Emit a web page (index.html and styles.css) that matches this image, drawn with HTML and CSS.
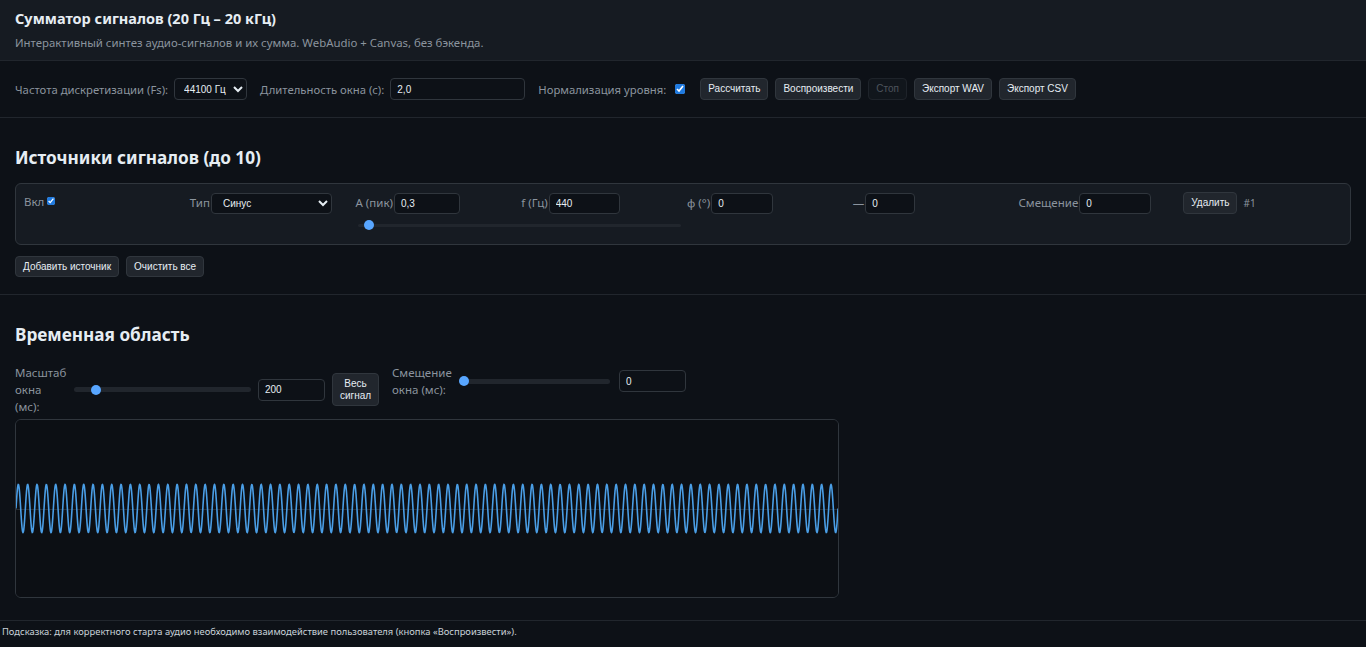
FILE: index.html
```html
<!DOCTYPE html>
<html lang="ru">
<head>
<meta charset="utf-8">
<title>Сумматор сигналов</title>
<link rel="stylesheet" href="styles.css">
</head>
<body>
<header class="app-header">
  <h1 class="app-title">Сумматор сигналов (20 Гц – 20 кГц)</h1>
  <p class="app-subtitle">Интерактивный синтез аудио-сигналов и их сумма. WebAudio + Canvas, без бэкенда.</p>
</header>

<div class="toolbar">
  <label class="field">
    <span class="field-label">Частота дискретизации (Fs):</span>
    <select class="select select-fs"><option>44100 Гц</option></select>
  </label>
  <label class="field">
    <span class="field-label">Длительность окна (с):</span>
    <input class="input input-dur" type="text" value="2,0">
  </label>
  <label class="field field-check">
    <span class="field-label">Нормализация уровня:</span>
    <input class="check" type="checkbox" checked>
  </label>
  <div class="btn-group">
    <button class="btn">Рассчитать</button>
    <button class="btn">Воспроизвести</button>
    <button class="btn" disabled>Стоп</button>
    <button class="btn">Экспорт WAV</button>
    <button class="btn">Экспорт CSV</button>
  </div>
</div>

<section class="section section-sources">
  <h2 class="section-title">Источники сигналов (до 10)</h2>
  <div class="source-card">
    <label class="cell cell-on"><span class="cell-label">Вкл</span><input class="check check-sm" type="checkbox" checked></label>
    <label class="cell"><span class="cell-label">Тип</span><select class="select select-type"><option>Синус</option></select></label>
    <label class="cell"><span class="cell-label">A (пик)</span><input class="input w-a" type="text" value="0,3"></label>
    <label class="cell"><span class="cell-label">f (Гц)</span><input class="input w-f" type="text" value="440"></label>
    <label class="cell"><span class="cell-label">φ (°)</span><input class="input w-phi" type="text" value="0"></label>
    <label class="cell"><span class="cell-label">—</span><input class="input w-dash" type="text" value="0"></label>
    <label class="cell"><span class="cell-label">Смещение</span><input class="input w-off" type="text" value="0"></label>
    <div class="cell cell-actions"><button class="btn">Удалить</button><span class="source-num">#1</span></div>
    <input class="range range-amp" type="range" min="0" max="100" value="2">
  </div>
  <div class="source-actions">
    <button class="btn">Добавить источник</button>
    <button class="btn">Очистить все</button>
  </div>
</section>

<section class="section section-time">
  <h2 class="section-title">Временная область</h2>
  <div class="time-controls">
    <div class="time-group">
      <span class="time-label time-label-scale">Масштаб<br>окна<br>(мс):</span>
      <input class="range range-scale" type="range" min="1" max="2000" value="200">
      <input class="input w-scale" type="text" value="200">
      <button class="btn btn-tall">Весь<br>сигнал</button>
    </div>
    <div class="time-group">
      <span class="time-label time-label-off">Смещение<br>окна (мс):</span>
      <input class="range range-off" type="range" min="0" max="1800" value="0">
      <input class="input w-offset" type="text" value="0">
    </div>
  </div>
  <canvas id="scope" class="scope" width="822" height="177"></canvas>
</section>

<footer class="hint">Подсказка: для корректного старта аудио необходимо взаимодействие пользователя (кнопка «Воспроизвести»).</footer>

<script src="script.js"></script>
</body>
</html>
```

FILE: styles.css
```css
:root {
  color-scheme: dark;
}
* {
  box-sizing: border-box;
}
body {
  margin: 0;
  background: #0d1117;
  color: #e6edf3;
  font-family: "Noto Sans", "Open Sans", sans-serif;
}

.app-header {
  background: #161b22;
  border-bottom: 1px solid #21262d;
  padding: 8px 15px 8px;
  height: 61px;
}
.app-title {
  margin: 0;
  font-size: 14.5px;
  font-weight: 700;
  line-height: 20px;
  color: #e6edf3;
}
.app-subtitle {
  margin: 6px 0 0;
  font-size: 11.4px;
  line-height: 18px;
  color: #8b949e;
}

.toolbar {
  display: flex;
  align-items: center;
  gap: 13px;
  padding: 17px 15px;
  border-bottom: 1px solid #21262d;
  height: 57px;
}
.field {
  display: flex;
  align-items: center;
  gap: 6px;
}
.field-label {
  font-size: 11.3px;
  color: #8b949e;
  white-space: nowrap;
}
.field-check {
  gap: 9px;
  margin-right: 2px;
}

.select,
.input {
  font-family: "Liberation Sans", Arial, sans-serif;
  font-size: 10px;
  color: #e6edf3;
  background: #0d1117;
  border: 1px solid #30363d;
  border-radius: 4px;
  height: 22px;
  padding: 0 6px;
  outline: none;
}
.select {
  padding: 0 2px 0 5px;
}
.select-fs {
  width: 73px;
}
.input-dur {
  width: 135px;
}
.select-type {
  width: 121px;
  height: 21px;
  padding-left: 7px;
}

.check {
  margin: 0;
  width: 10px;
  height: 10px;
  accent-color: #1f7ae0;
}
.check-sm {
  width: 8px;
  height: 8px;
  margin-left: 3px;
}

.btn-group {
  display: flex;
  gap: 7px;
}
.btn {
  font-family: "Liberation Sans", Arial, sans-serif;
  font-size: 10px;
  color: #e6edf3;
  background: #21262d;
  border: 1px solid #30363d;
  border-radius: 4px;
  height: 22px;
  padding: 0 7px;
  line-height: 12px;
  cursor: pointer;
}
.btn:disabled {
  opacity: 0.5;
  color: #8b949e;
  background: #161b22;
}

.section {
  border-bottom: 1px solid #21262d;
  padding: 0 15px;
}
.section-sources {
  padding-top: 28px;
  padding-bottom: 17px;
}
.section-title {
  margin: 0;
  font-size: 17.2px;
  font-weight: 700;
  line-height: 24px;
  color: #e6edf3;
}
.section-sources .section-title {
  margin-bottom: 13px;
}

.source-card {
  display: grid;
  grid-template-columns: repeat(8, 1fr);
  column-gap: 8px;
  row-gap: 3px;
  padding: 8px 8px 11px;
  background: #161b22;
  border: 1px solid #30363d;
  border-radius: 6px;
}
.cell {
  display: flex;
  align-items: center;
  gap: 1px;
  min-width: 0;
}
.cell-on {
  align-items: flex-start;
  padding-top: 1px;
  gap: 0;
}
.cell-on .check-sm {
  margin-top: 4px;
}
.cell-label {
  font-size: 11.5px;
  color: #8b949e;
  white-space: nowrap;
  line-height: 18px;
}
.w-a { width: 66px; height: 21px; }
.w-f { width: 71px; height: 21px; }
.w-phi { width: 62px; height: 21px; }
.w-dash { width: 50px; height: 21px; }
.w-off { width: 72px; height: 21px; }
.cell-actions {
  gap: 6px;
  margin-left: -1px;
}
.source-num {
  font-size: 10px;
  color: #8b949e;
}

.range {
  -webkit-appearance: none;
  appearance: none;
  margin: 0;
  height: 16px;
  background: transparent;
}
.range::-webkit-slider-runnable-track {
  height: 5px;
  background: #21262d;
  border-radius: 3px;
}
.range::-webkit-slider-thumb {
  -webkit-appearance: none;
  appearance: none;
  width: 10px;
  height: 10px;
  border-radius: 50%;
  background: #58a6ff;
  margin-top: -2.5px;
  border: none;
}
.range-amp {
  grid-column: 3 / span 2;
  width: 100%;
  margin-left: 2px;
}
.range-amp::-webkit-slider-runnable-track {
  height: 3px;
}
.range-amp::-webkit-slider-thumb {
  margin-top: -3.5px;
}

.source-actions {
  display: flex;
  gap: 7px;
  margin-top: 11px;
}
.source-actions .btn {
  height: 21px;
}

.section-time {
  padding-top: 28px;
  padding-bottom: 22px;
}
.time-controls {
  display: flex;
  align-items: flex-start;
  gap: 13px;
  margin-top: 17px;
}
.time-group {
  display: flex;
  align-items: center;
  gap: 7px;
}
.time-label {
  font-size: 11.5px;
  line-height: 17px;
  color: #8b949e;
  white-space: nowrap;
}
.time-label-scale {
  width: 52px;
}
.time-label-off {
  width: 60px;
}
.range-scale {
  width: 177px;
}
.range-off {
  width: 151px;
}
.w-scale {
  width: 67px;
}
.w-offset {
  width: 67px;
  margin-left: 2px;
}
.btn-tall {
  height: 33px;
  width: 47px;
  padding: 0 4px;
}

.scope {
  display: block;
  margin-top: 4px;
  width: 824px;
  height: 179px;
  border: 1px solid #30363d;
  border-radius: 6px;
  background: #0d1117;
}

.hint {
  padding: 3px 2px 0;
  font-size: 9.4px;
  line-height: 16px;
  color: #c9d1d9;
}
```

FILE: script.js
```javascript
(function () {
  var c = document.getElementById('scope');
  var ctx = c.getContext('2d');
  var W = c.width, H = c.height;
  ctx.fillStyle = '#0c0f14';
  ctx.fillRect(0, 0, W, H);
  var mid = H / 2;
  ctx.strokeStyle = 'rgba(139,148,158,0.22)';
  ctx.lineWidth = 1;
  ctx.beginPath();
  ctx.moveTo(0, Math.round(mid) + 0.5);
  ctx.lineTo(W, Math.round(mid) + 0.5);
  ctx.stroke();
  ctx.strokeStyle = '#4a9ee6';
  ctx.lineWidth = 1.6;
  ctx.beginPath();
  var amp = 24, f = 440, win = 0.2;
  for (var i = 0; i <= W * 4; i++) {
    var x = i / 4;
    var t = (x / W) * win;
    var y = mid - amp * Math.sin(2 * Math.PI * f * t);
    if (i === 0) ctx.moveTo(x, y); else ctx.lineTo(x, y);
  }
  ctx.stroke();
})();
```
